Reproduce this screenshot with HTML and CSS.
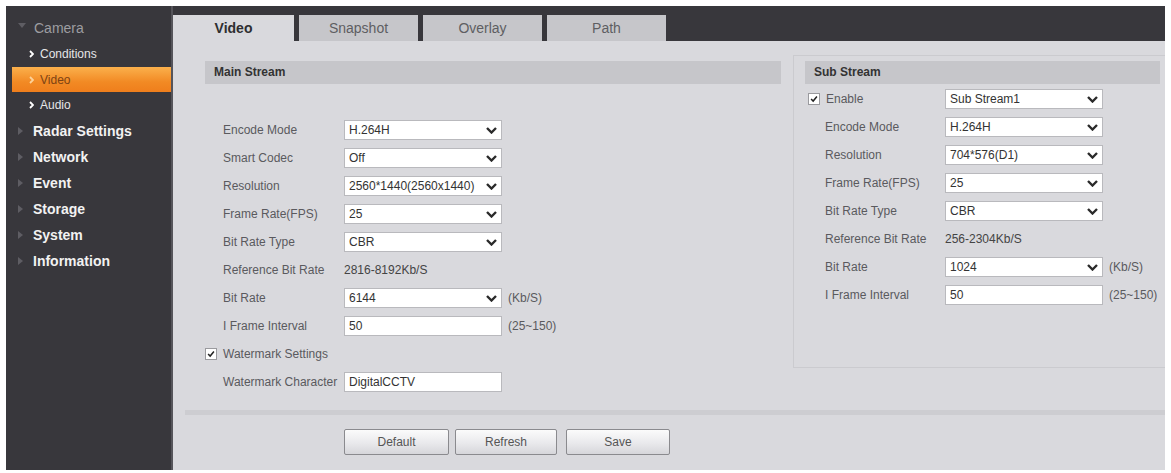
FILE: index.html
```html
<!DOCTYPE html>
<html lang="en">
<head>
  <meta charset="UTF-8" />
  <title>Camera - Video</title>
  <link rel="stylesheet" href="styles.css">
</head>
<body>
<div class="app">

  <!-- left menu -->
  <aside class="side">
    <div class="item top open"><span class="tri down"></span>Camera</div>
    <div class="item sub"><svg class="chev" viewBox="0 0 5 8"><polyline points="1,1 4,4 1,7"/></svg>Conditions</div>
    <div class="item sub on"><svg class="chev" viewBox="0 0 5 8"><polyline points="1,1 4,4 1,7"/></svg>Video</div>
    <div class="item sub"><svg class="chev" viewBox="0 0 5 8"><polyline points="1,1 4,4 1,7"/></svg>Audio</div>
    <div class="item top"><span class="tri"></span>Radar Settings</div>
    <div class="item top"><span class="tri"></span>Network</div>
    <div class="item top"><span class="tri"></span>Event</div>
    <div class="item top"><span class="tri"></span>Storage</div>
    <div class="item top"><span class="tri"></span>System</div>
    <div class="item top"><span class="tri"></span>Information</div>
  </aside>

  <main class="main">
    <nav class="tabs">
      <div class="tab active">Video</div>
      <div class="tab">Snapshot</div>
      <div class="tab">Overlay</div>
      <div class="tab">Path</div>
    </nav>

    <section class="content">
      <div class="streams">

        <div class="panel mainp">
          <div class="phead">Main Stream</div>
          <div class="rows">
            <div class="row"></div>
            <div class="row"><span class="lbl">Encode Mode</span><div class="sel">H.264H<svg class="dd" viewBox="0 0 11 7"><polyline points="1,1 5.5,5.5 10,1"/></svg></div></div>
            <div class="row"><span class="lbl">Smart Codec</span><div class="sel">Off<svg class="dd" viewBox="0 0 11 7"><polyline points="1,1 5.5,5.5 10,1"/></svg></div></div>
            <div class="row"><span class="lbl">Resolution</span><div class="sel">2560*1440(2560x1440)<svg class="dd" viewBox="0 0 11 7"><polyline points="1,1 5.5,5.5 10,1"/></svg></div></div>
            <div class="row"><span class="lbl">Frame Rate(FPS)</span><div class="sel">25<svg class="dd" viewBox="0 0 11 7"><polyline points="1,1 5.5,5.5 10,1"/></svg></div></div>
            <div class="row"><span class="lbl">Bit Rate Type</span><div class="sel">CBR<svg class="dd" viewBox="0 0 11 7"><polyline points="1,1 5.5,5.5 10,1"/></svg></div></div>
            <div class="row"><span class="lbl">Reference Bit Rate</span><span class="val">2816-8192Kb/S</span></div>
            <div class="row"><span class="lbl">Bit Rate</span><div class="sel">6144<svg class="dd" viewBox="0 0 11 7"><polyline points="1,1 5.5,5.5 10,1"/></svg></div><span class="unit">(Kb/S)</span></div>
            <div class="row"><span class="lbl">I Frame Interval</span><input class="txt" type="text" value="50"><span class="unit">(25~150)</span></div>
            <div class="row chk-row"><span class="box"><svg viewBox="0 0 12 12"><polyline points="2.5,6 5,8.5 9.5,3"/></svg></span><span class="lbl">Watermark Settings</span></div>
            <div class="row"><span class="lbl">Watermark Character</span><input class="txt" type="text" value="DigitalCCTV"></div>
          </div>
        </div>

        <div class="panel subp">
          <div class="phead">Sub Stream</div>
          <div class="rows">
            <div class="row enable"><span class="box"><svg viewBox="0 0 12 12"><polyline points="2.5,6 5,8.5 9.5,3"/></svg></span><span class="lbl">Enable</span><div class="sel">Sub Stream1<svg class="dd" viewBox="0 0 11 7"><polyline points="1,1 5.5,5.5 10,1"/></svg></div></div>
            <div class="row"><span class="lbl">Encode Mode</span><div class="sel">H.264H<svg class="dd" viewBox="0 0 11 7"><polyline points="1,1 5.5,5.5 10,1"/></svg></div></div>
            <div class="row"><span class="lbl">Resolution</span><div class="sel">704*576(D1)<svg class="dd" viewBox="0 0 11 7"><polyline points="1,1 5.5,5.5 10,1"/></svg></div></div>
            <div class="row"><span class="lbl">Frame Rate(FPS)</span><div class="sel">25<svg class="dd" viewBox="0 0 11 7"><polyline points="1,1 5.5,5.5 10,1"/></svg></div></div>
            <div class="row"><span class="lbl">Bit Rate Type</span><div class="sel">CBR<svg class="dd" viewBox="0 0 11 7"><polyline points="1,1 5.5,5.5 10,1"/></svg></div></div>
            <div class="row"><span class="lbl">Reference Bit Rate</span><span class="val">256-2304Kb/S</span></div>
            <div class="row"><span class="lbl">Bit Rate</span><div class="sel">1024<svg class="dd" viewBox="0 0 11 7"><polyline points="1,1 5.5,5.5 10,1"/></svg></div><span class="unit">(Kb/S)</span></div>
            <div class="row"><span class="lbl">I Frame Interval</span><input class="txt" type="text" value="50"><span class="unit">(25~150)</span></div>
          </div>
        </div>

      </div>

      <div class="sep"></div>

      <div class="btns">
        <button type="button">Default</button>
        <button type="button" class="refresh">Refresh</button>
        <button type="button" class="save">Save</button>
      </div>
    </section>
  </main>
</div>
</body>
</html>
```

FILE: styles.css
```css
* , *::before, *::after {
  box-sizing: border-box;
}

body {
  margin: 0;
  background: #fff;
  font-family: "Liberation Sans", Arial, sans-serif;
  -webkit-font-smoothing: antialiased;
}

.app {
  display: flex;
  width: 1159px;
  height: 464px;
  margin: 6px 0 0 6px;
}

/* ---- side menu ---- */
.side {
  width: 167px;
  background: #38373c;
  border-right: 2px solid #55545a;
  padding-top: 9px;
}

.item {
  display: flex;
  align-items: center;
  height: 26px;
  white-space: nowrap;
}

.item.top {
  padding-left: 12px;
  color: #f2f2f2;
  font-size: 14px;
  font-weight: bold;
}

.item.open {
  color: #9d9da1;
  font-weight: normal;
}

.tri {
  width: 0;
  height: 0;
  margin-right: 10px;
  border-top: 4px solid transparent;
  border-bottom: 4px solid transparent;
  border-left: 5px solid #5e5d63;
}

.tri.down {
  border-left: 4px solid transparent;
  border-right: 4px solid transparent;
  border-top: 5px solid #5e5d63;
  border-bottom: 0;
  margin-right: 8px;
  margin-top: -6px;
}

.item.sub {
  padding-left: 23px;
  color: #e6e6e8;
  font-size: 12px;
}

.chev {
  width: 5px;
  height: 8px;
  margin-right: 6px;
  fill: none;
  stroke: #fff;
  stroke-width: 1.8;
}

.item.sub.on {
  margin-left: 6px;
  padding-left: 17px;
  height: 25px;
  background: linear-gradient(#fbb04c, #f28a24 60%, #ef7e1c);
  color: #7d4314;
}

.item.sub.on .chev {
  stroke: #fcd29a;
}

/* ---- main ---- */
.main {
  flex: 1;
  display: flex;
  flex-direction: column;
}

.tabs {
  display: flex;
  gap: 5px;
  height: 35px;
  padding-top: 9px;
  background: #38373c;
}

.tab {
  width: 119px;
  height: 26px;
  line-height: 26px;
  text-align: center;
  font-size: 14px;
  color: #5e5e62;
  background: #c6c6ca;
}

.tab.active {
  width: 121px;
  background: #d9d9dd;
  color: #2e2e30;
  font-weight: bold;
}

.content {
  flex: 1;
  background: #d9d9dd;
  padding: 20px 0 0 32px;
}

.streams {
  display: flex;
  align-items: flex-start;
}

.panel .phead {
  height: 23px;
  line-height: 23px;
  padding-left: 9px;
  background: #c6c6ca;
  color: #333;
  font-size: 12px;
  font-weight: bold;
}

.mainp {
  width: 576px;
}

.mainp .rows {
  padding-top: 4px;
  padding-left: 18px;
}

.subp {
  flex: 1;
  height: 313px;
  margin-top: -6px;
  margin-left: 12px;
  padding: 5px 5px 0 11px;
  border: 1px solid #cbcbcf;
  border-right: 0;
}

.subp .rows {
  padding-top: 1px;
  padding-left: 20px;
}

.row {
  display: flex;
  align-items: center;
  height: 28px;
  font-size: 12px;
  color: #5a5a5e;
}

.lbl {
  width: 121px;
  white-space: nowrap;
}

.subp .lbl {
  width: 120px;
}

.val {
  color: #444;
}

.sel, .txt {
  width: 158px;
  height: 20px;
  background: #fff;
  border: 1px solid #b9b9bd;
  font-size: 12px;
  color: #333;
  padding: 0 4px;
}

.sel {
  display: flex;
  align-items: center;
  justify-content: space-between;
  white-space: nowrap;
}

.dd {
  width: 11px;
  height: 7px;
  fill: none;
  stroke: #2a2a2a;
  stroke-width: 2.4;
}

.txt {
  font-family: inherit;
  outline: none;
}

.unit {
  margin-left: 6px;
  color: #5a5a5e;
}

.box {
  display: inline-flex;
  width: 12px;
  height: 12px;
  margin-right: 6px;
  background: #fff;
  border: 1px solid #9a9a9e;
}

.box svg {
  width: 10px;
  height: 10px;
  fill: none;
  stroke: #222;
  stroke-width: 1.8;
}

.chk-row {
  margin-left: -18px;
}

.row.enable {
  margin-left: -17px;
}

.row.enable .lbl {
  width: 119px;
}

.sep {
  height: 5px;
  margin: 14px 0 0 -20px;
  background: #cdcdd1;
}

.btns {
  display: flex;
  gap: 6px;
  padding: 14px 0 0 139px;
}

button {
  width: 105px;
  height: 26px;
  font-family: "Liberation Sans", Arial, sans-serif;
  font-size: 12px;
  color: #555;
  background: linear-gradient(#fbfbfb, #e9e9ec 55%, #d6d6da);
  border: 1px solid #8a8a8e;
  border-radius: 2px;
}

button.refresh {
  width: 102px;
}

button.save {
  margin-left: 3px;
  width: 104px;
}
```
